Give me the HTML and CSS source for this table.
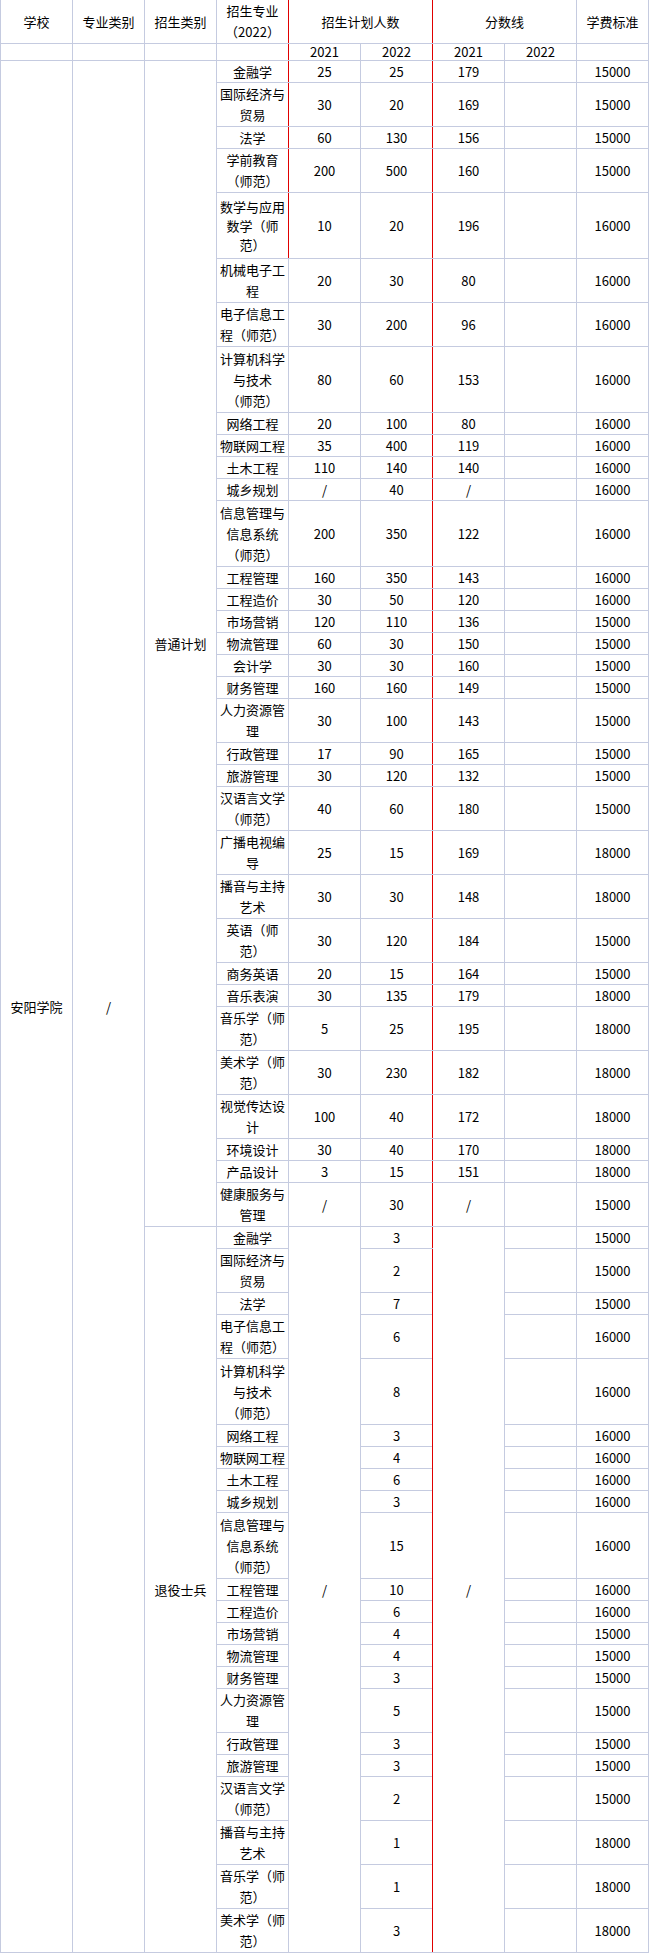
FILE: index.html
```html
<!DOCTYPE html>
<html lang="zh-CN">
<head>
<meta charset="utf-8">
<title>安阳学院 招生计划</title>
<link rel="stylesheet" href="styles.css">
</head>
<body>
<table class="grid">
<thead>
<tr class="hh1"><td>学校</td><td>专业类别</td><td>招生类别</td><td class="red-r">招生专业<br>（2022）</td><td colspan="2" class="red-l red-r">招生计划人数</td><td colspan="2" class="red-l">分数线</td><td>学费标准</td></tr>
<tr class="hh2"><td></td><td></td><td></td><td class="red-r"></td><td class="red-l">2021</td><td class="red-r">2022</td><td class="red-l">2021</td><td>2022</td><td></td></tr>
</thead>
<tbody>
<tr class="h1"><td rowspan="56">安阳学院</td><td rowspan="56">/</td><td rowspan="34">普通计划</td><td class="red-r">金融学</td><td class="red-l">25</td><td class="red-r">25</td><td class="red-l">179</td><td></td><td>15000</td></tr>
<tr class="h2"><td class="red-r">国际经济与<br>贸易</td><td class="red-l">30</td><td class="red-r">20</td><td class="red-l">169</td><td></td><td>15000</td></tr>
<tr class="h1"><td class="red-r">法学</td><td class="red-l">60</td><td class="red-r">130</td><td class="red-l">156</td><td></td><td>15000</td></tr>
<tr class="h2"><td class="red-r">学前教育<br>（师范）</td><td class="red-l">200</td><td class="red-r">500</td><td class="red-l">160</td><td></td><td>15000</td></tr>
<tr class="h3"><td class="red-r tight">数学与应用<br>数学（师<br>范）</td><td class="red-l">10</td><td class="red-r">20</td><td class="red-l">196</td><td></td><td>16000</td></tr>
<tr class="h2"><td>机械电子工<br>程</td><td>20</td><td class="red-r">30</td><td class="red-l">80</td><td></td><td>16000</td></tr>
<tr class="h2"><td>电子信息工<br>程（师范）</td><td>30</td><td class="red-r">200</td><td class="red-l">96</td><td></td><td>16000</td></tr>
<tr class="h3"><td>计算机科学<br>与技术<br>（师范）</td><td>80</td><td class="red-r">60</td><td class="red-l">153</td><td></td><td>16000</td></tr>
<tr class="h1"><td>网络工程</td><td>20</td><td class="red-r">100</td><td class="red-l">80</td><td></td><td>16000</td></tr>
<tr class="h1"><td>物联网工程</td><td>35</td><td class="red-r">400</td><td class="red-l">119</td><td></td><td>16000</td></tr>
<tr class="h1"><td>土木工程</td><td>110</td><td class="red-r">140</td><td class="red-l">140</td><td></td><td>16000</td></tr>
<tr class="h1"><td>城乡规划</td><td>/</td><td class="red-r">40</td><td class="red-l">/</td><td></td><td>16000</td></tr>
<tr class="h3"><td>信息管理与<br>信息系统<br>（师范）</td><td>200</td><td class="red-r">350</td><td class="red-l">122</td><td></td><td>16000</td></tr>
<tr class="h1"><td>工程管理</td><td>160</td><td class="red-r">350</td><td class="red-l">143</td><td></td><td>16000</td></tr>
<tr class="h1"><td>工程造价</td><td>30</td><td class="red-r">50</td><td class="red-l">120</td><td></td><td>16000</td></tr>
<tr class="h1"><td>市场营销</td><td>120</td><td class="red-r">110</td><td class="red-l">136</td><td></td><td>15000</td></tr>
<tr class="h1"><td>物流管理</td><td>60</td><td class="red-r">30</td><td class="red-l">150</td><td></td><td>15000</td></tr>
<tr class="h1"><td>会计学</td><td>30</td><td class="red-r">30</td><td class="red-l">160</td><td></td><td>15000</td></tr>
<tr class="h1"><td>财务管理</td><td>160</td><td class="red-r">160</td><td class="red-l">149</td><td></td><td>15000</td></tr>
<tr class="h2"><td>人力资源管<br>理</td><td>30</td><td class="red-r">100</td><td class="red-l">143</td><td></td><td>15000</td></tr>
<tr class="h1"><td>行政管理</td><td>17</td><td class="red-r">90</td><td class="red-l">165</td><td></td><td>15000</td></tr>
<tr class="h1"><td>旅游管理</td><td>30</td><td class="red-r">120</td><td class="red-l">132</td><td></td><td>15000</td></tr>
<tr class="h2"><td>汉语言文学<br>（师范）</td><td>40</td><td class="red-r">60</td><td class="red-l">180</td><td></td><td>15000</td></tr>
<tr class="h2"><td>广播电视编<br>导</td><td>25</td><td class="red-r">15</td><td class="red-l">169</td><td></td><td>18000</td></tr>
<tr class="h2"><td>播音与主持<br>艺术</td><td>30</td><td class="red-r">30</td><td class="red-l">148</td><td></td><td>18000</td></tr>
<tr class="h2"><td>英语（师<br>范）</td><td>30</td><td class="red-r">120</td><td class="red-l">184</td><td></td><td>15000</td></tr>
<tr class="h1"><td>商务英语</td><td>20</td><td class="red-r">15</td><td class="red-l">164</td><td></td><td>15000</td></tr>
<tr class="h1"><td>音乐表演</td><td>30</td><td class="red-r">135</td><td class="red-l">179</td><td></td><td>18000</td></tr>
<tr class="h2"><td>音乐学（师<br>范）</td><td>5</td><td class="red-r">25</td><td class="red-l">195</td><td></td><td>18000</td></tr>
<tr class="h2"><td>美术学（师<br>范）</td><td>30</td><td class="red-r">230</td><td class="red-l">182</td><td></td><td>18000</td></tr>
<tr class="h2"><td>视觉传达设<br>计</td><td>100</td><td class="red-r">40</td><td class="red-l">172</td><td></td><td>18000</td></tr>
<tr class="h1"><td>环境设计</td><td>30</td><td class="red-r">40</td><td class="red-l">170</td><td></td><td>18000</td></tr>
<tr class="h1"><td>产品设计</td><td>3</td><td class="red-r">15</td><td class="red-l">151</td><td></td><td>18000</td></tr>
<tr class="h2"><td>健康服务与<br>管理</td><td>/</td><td class="red-r">30</td><td class="red-l">/</td><td></td><td>15000</td></tr>
<tr class="h1"><td rowspan="22">退役士兵</td><td>金融学</td><td rowspan="22">/</td><td class="red-r">3</td><td rowspan="22" class="red-l">/</td><td></td><td>15000</td></tr>
<tr class="h2"><td>国际经济与<br>贸易</td><td class="red-r">2</td><td></td><td>15000</td></tr>
<tr class="h1"><td>法学</td><td class="red-r">7</td><td></td><td>15000</td></tr>
<tr class="h2"><td>电子信息工<br>程（师范）</td><td class="red-r">6</td><td></td><td>16000</td></tr>
<tr class="h3"><td>计算机科学<br>与技术<br>（师范）</td><td class="red-r">8</td><td></td><td>16000</td></tr>
<tr class="h1"><td>网络工程</td><td class="red-r">3</td><td></td><td>16000</td></tr>
<tr class="h1"><td>物联网工程</td><td class="red-r">4</td><td></td><td>16000</td></tr>
<tr class="h1"><td>土木工程</td><td class="red-r">6</td><td></td><td>16000</td></tr>
<tr class="h1"><td>城乡规划</td><td class="red-r">3</td><td></td><td>16000</td></tr>
<tr class="h3"><td>信息管理与<br>信息系统<br>（师范）</td><td class="red-r">15</td><td></td><td>16000</td></tr>
<tr class="h1"><td>工程管理</td><td class="red-r">10</td><td></td><td>16000</td></tr>
<tr class="h1"><td>工程造价</td><td class="red-r">6</td><td></td><td>16000</td></tr>
<tr class="h1"><td>市场营销</td><td class="red-r">4</td><td></td><td>15000</td></tr>
<tr class="h1"><td>物流管理</td><td class="red-r">4</td><td></td><td>15000</td></tr>
<tr class="h1"><td>财务管理</td><td class="red-r">3</td><td></td><td>15000</td></tr>
<tr class="h2"><td>人力资源管<br>理</td><td class="red-r">5</td><td></td><td>15000</td></tr>
<tr class="h1"><td>行政管理</td><td class="red-r">3</td><td></td><td>15000</td></tr>
<tr class="h1"><td>旅游管理</td><td class="red-r">3</td><td></td><td>15000</td></tr>
<tr class="h2"><td>汉语言文学<br>（师范）</td><td class="red-r">2</td><td></td><td>15000</td></tr>
<tr class="h2"><td>播音与主持<br>艺术</td><td class="red-r">1</td><td></td><td>18000</td></tr>
<tr class="h2"><td>音乐学（师<br>范）</td><td class="red-r">1</td><td></td><td>18000</td></tr>
<tr class="h2"><td>美术学（师<br>范）</td><td class="red-r">3</td><td></td><td>18000</td></tr>
</tbody>
</table>
</body>
</html>
```

FILE: styles.css
```css
html, body {
  margin: 0;
  padding: 0;
  background: #ffffff;
}

body {
  font-family: "Noto Sans CJK SC", "Noto Sans", "DejaVu Sans", sans-serif;
  font-size: 13px;
  color: #000000;
}

.grid {
  border-collapse: collapse;
  table-layout: fixed;
  width: 649px;
}

.grid td {
  border: 1px solid #c5cbe0;
  padding: 0;
  text-align: center;
  vertical-align: middle;
  line-height: 21px;
  white-space: nowrap;
  overflow: hidden;
}

.grid thead tr:first-child td {
  border-top: none;
}

.hh1 { height: 43px; }
.hh2 { height: 17px; }
.grid .hh2 td { line-height: 15px; }
.h1 { height: 22px; }
.h2 { height: 44px; }
.h3 { height: 66px; }

.grid td.tight { line-height: 19px; }

.grid td.red-r { border-right-color: #e00000; }
.grid td.red-l { border-left-color: #e00000; }
```
